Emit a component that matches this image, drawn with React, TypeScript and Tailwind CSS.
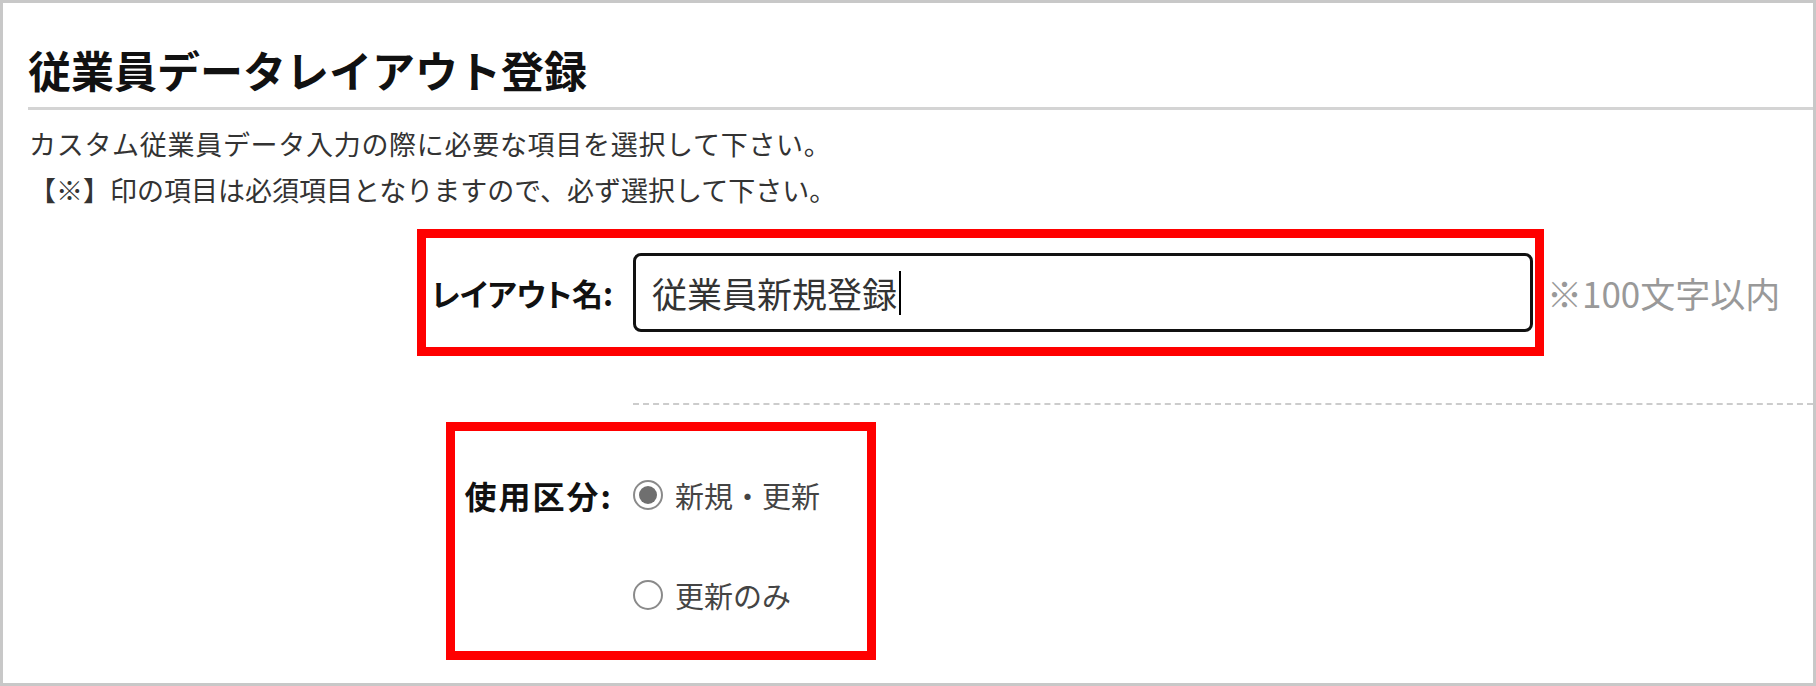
const jp = "font-['Noto_Sans_CJK_JP','Noto_Sans',sans-serif]";

function Radio({ checked, label }: { checked: boolean; label: string }) {
  return (
    <div className="flex h-[30px] items-center gap-[12px]">
      <span className="flex h-[30px] w-[30px] items-center justify-center rounded-full border-2 border-[#8a8a8a] bg-white">
        {checked && <span className="h-[18px] w-[18px] rounded-full bg-[#6f6f6f]" />}
      </span>
      <span className="text-[29px] leading-[30px] text-[#444]">{label}</span>
    </div>
  );
}

export default function App() {
  return (
    <div className={`${jp} box-border h-[686px] w-[1816px] overflow-hidden border-[3px] border-[#c8c8c8] bg-white`}>
      {/* heading */}
      <div className="ml-[25px] mt-[38px] border-b-[3px] border-[#d4d4d4] pb-[10px]">
        <h1 className="text-[43px] font-bold leading-[56px] text-[#111]">従業員データレイアウト登録</h1>
      </div>

      <div className="ml-[26px] mt-[11px] text-[27px] leading-[46px] text-[#333]">
        <p className="tracking-[0.7px]">カスタム従業員データ入力の際に必要な項目を選択して下さい。</p>
        <p>【※】印の項目は必須項目となりますので、必ず選択して下さい。</p>
      </div>

      {/* layout name */}
      <div className="ml-[414px] mt-[16px] flex items-center">
        <div className="flex h-[127px] items-center border-[9px] border-[#ff0000] pr-[2px]">
          <div className="flex w-[187px] justify-end whitespace-nowrap text-[31px] font-bold leading-[40px] text-[#111] [font-feature-settings:'palt']">
            レイアウト名:
          </div>
          <div className="ml-[20px] flex h-[79px] w-[900px] items-center rounded-[8px] border-[3px] border-[#111] bg-white pl-[16px]">
            <span className="text-[35px] leading-[44px] text-[#333]">従業員新規登録</span>
            <span className="ml-[2px] h-[44px] w-[2px] bg-black" />
          </div>
        </div>
        <span className="ml-[3px] text-[35px] leading-[40px] text-[#999]">※100文字以内</span>
      </div>

      <div className="ml-[630px] mt-[47px] border-t-2 border-dashed border-[#cccccc]" />

      {/* usage type */}
      <div className="ml-[443px] mt-[17px] flex h-[238px] w-[430px] items-start border-[9px] border-[#ff0000] pt-[49px]">
        <div className="flex h-[30px] w-[158px] items-center justify-end whitespace-nowrap text-[32px] font-bold tracking-[2px] text-[#111]">
          使用区分:
        </div>
        <div className="ml-[20px] flex flex-col gap-[70px]">
          <Radio checked label="新規・更新" />
          <Radio checked={false} label="更新のみ" />
        </div>
      </div>
    </div>
  );
}
